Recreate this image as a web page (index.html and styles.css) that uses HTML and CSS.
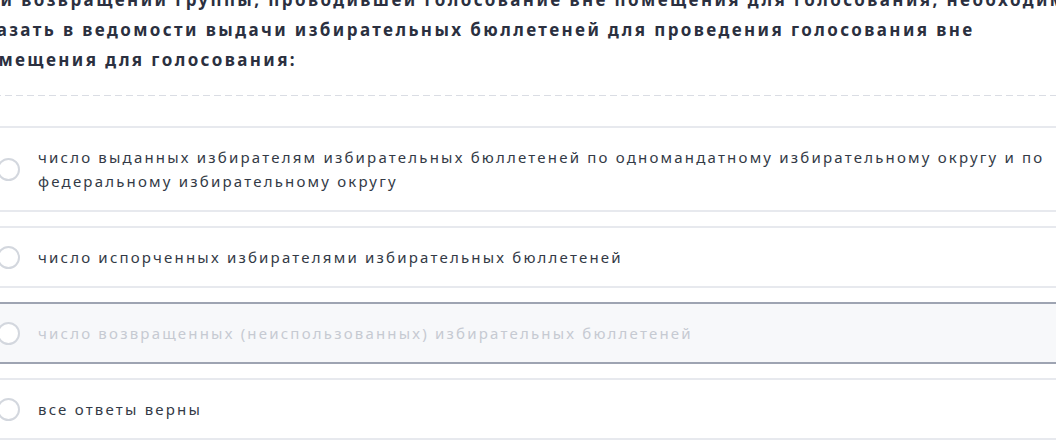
FILE: index.html
```html
<!DOCTYPE html>
<html lang="ru">

<head>
    <meta charset="UTF-8">
    <meta name="viewport" content="width=device-width, initial-scale=1.0">
    <title>Вопрос</title>
    <link rel="stylesheet" href="styles.css">
</head>

<body>

    <div class="question">
        <div class="question-text">
            При возвращении группы, проводившей голосование вне помещения для голосования, необходимо указать в ведомости выдачи избирательных бюллетеней для проведения голосования вне помещения для голосования:
        </div>

        <div class="answers">
            <label class="answer">
                <span class="radio"></span>
                <span class="answer-text">число выданных избирателям избирательных бюллетеней по одномандатному избирательному округу и по федеральному избирательному округу</span>
            </label>
            <label class="answer">
                <span class="radio"></span>
                <span class="answer-text">число испорченных избирателями избирательных бюллетеней</span>
            </label>
            <label class="answer disabled">
                <span class="radio"></span>
                <span class="answer-text">число возвращенных (неиспользованных) избирательных бюллетеней</span>
            </label>
            <label class="answer">
                <span class="radio"></span>
                <span class="answer-text">все ответы верны</span>
            </label>
        </div>
    </div>

</body>

</html>
```

FILE: styles.css
```css
html,
body {
    margin: 0;
    padding: 0;
    background: #fff;
    overflow: hidden;
}

body {
    font-family: "Noto Sans", "Open Sans", sans-serif;
    color: #333a46;
}

.question {
    width: 1160px;
    margin-left: -28px;
    margin-top: -15px;
}

.question-text {
    font-size: 17px;
    font-weight: 700;
    letter-spacing: 2.4px;
    line-height: 30px;
    color: #2b3040;
    padding-bottom: 21px;
    margin-right: 30px;
    position: relative;
}

/* dashed divider under the question */
.question-text::after {
    content: "";
    position: absolute;
    left: 0;
    right: -30px;
    bottom: 0;
    height: 1px;
    background: repeating-linear-gradient(90deg, #dadde4 0 7px, transparent 7px 11px);
}

.answers {
    display: flex;
    flex-direction: column;
    gap: 14px;
    margin-top: 30px;
}

.answer {
    display: flex;
    align-items: center;
    gap: 18px;
    padding: 17px 23px;
    border: 2px solid #e7e9ee;
    background: #fff;
    cursor: pointer;
}

.radio {
    flex: none;
    width: 19px;
    height: 19px;
    border: 2px solid #d3d7de;
    border-radius: 50%;
    background: #fff;
}

.answer-text {
    font-size: 15px;
    line-height: 24px;
    letter-spacing: 2.2px;
    padding-right: 40px;
}

.answer.disabled {
    background: #f7f8fa;
    border-color: #9ea4b2;
    color: #c6cad2;
}
```
